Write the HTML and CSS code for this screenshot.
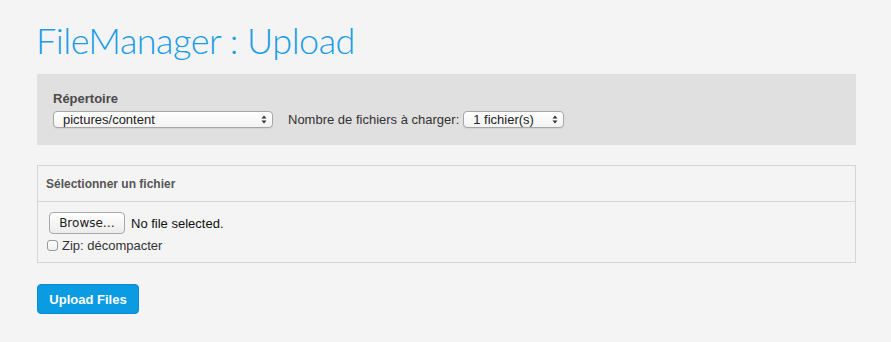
FILE: index.html
```html
<!DOCTYPE html>
<html lang="fr">

<head>
    <meta charset="UTF-8">
    <meta name="viewport" content="width=device-width, initial-scale=1.0">
    <link rel="stylesheet" href="styles.css">
    <title>FileManager : Upload</title>
</head>

<body>
    <div class="page">
        <h1 class="title">FileManager : Upload</h1>

        <div class="options">
            <label class="opt-label" for="dir">Répertoire</label>
            <div class="opt-row">
                <span class="select-wrap dir-select">
                    <select id="dir">
                        <option>pictures/content</option>
                    </select>
                    <svg class="arrows" width="6" height="9" viewBox="0 0 6 9">
                        <path d="M3 0.5 L5.5 3.5 L0.5 3.5 Z M3 8.5 L5.5 5.5 L0.5 5.5 Z" fill="#333"/>
                    </svg>
                </span>
                <span class="count-label">Nombre de fichiers à charger:</span>
                <span class="select-wrap count-select">
                    <select id="count">
                        <option>1 fichier(s)</option>
                        <option>2 fichier(s)</option>
                        <option>3 fichier(s)</option>
                    </select>
                    <svg class="arrows" width="6" height="9" viewBox="0 0 6 9">
                        <path d="M3 0.5 L5.5 3.5 L0.5 3.5 Z M3 8.5 L5.5 5.5 L0.5 5.5 Z" fill="#333"/>
                    </svg>
                </span>
            </div>
        </div>

        <div class="file-box">
            <div class="file-head">Sélectionner un fichier</div>
            <div class="file-body">
                <label class="file-row">
                    <input type="file" class="file-input">
                    <span class="browse">Browse…</span>
                    <span class="file-name">No file selected.</span>
                </label>
                <label class="zip-row">
                    <input type="checkbox" class="zip-check">
                    <span>Zip: décompacter</span>
                </label>
            </div>
        </div>

        <button class="upload-btn">Upload Files</button>
    </div>
</body>

</html>
```

FILE: styles.css
```css
* {
    padding: 0;
    margin: 0;
    box-sizing: border-box;
}

body {
    background-color: #f4f4f4;
    font-family: "Liberation Sans", Arial, sans-serif;
    font-size: 13px;
    color: #222;
}

.page {
    width: 819px;
    margin-left: 37px;
    padding-top: 20px;
}

.title {
    font-family: "Lato", "Liberation Sans", sans-serif;
    font-weight: 300;
    font-size: 36px;
    line-height: 40px;
    letter-spacing: -0.5px;
    margin-left: -1px;
    color: #1a9de6;
    margin-bottom: 14px;
}

.options {
    background-color: #e0e0e0;
    padding: 17px 16px 17px;
}

.opt-label {
    display: block;
    font-weight: bold;
    font-size: 13px;
    line-height: 16px;
    color: #4a4a4a;
    margin-bottom: 4px;
}

.opt-row {
    display: flex;
    align-items: center;
}

.select-wrap {
    position: relative;
    display: inline-block;
}

.select-wrap select {
    appearance: none;
    -webkit-appearance: none;
    display: block;
    width: 100%;
    height: 17px;
    border: 1px solid #a6a6a6;
    border-radius: 4px;
    background: linear-gradient(#ffffff, #f3f3f3);
    font-family: "Liberation Sans", Arial, sans-serif;
    font-size: 13px;
    line-height: 15px;
    color: #222;
    padding: 0 16px 0 9px;
    box-shadow: 0 1px 0 rgba(0, 0, 0, 0.05);
}

.arrows {
    position: absolute;
    right: 6px;
    top: 4px;
    pointer-events: none;
}

.dir-select {
    width: 220px;
}

.count-label {
    margin-left: 15px;
    margin-right: 4px;
    color: #333;
}

.count-select {
    width: 101px;
}

.file-box {
    margin-top: 20px;
    border: 1px solid #d5d5d5;
}

.file-head {
    height: 36px;
    line-height: 36px;
    padding-left: 8px;
    font-weight: bold;
    font-size: 12px;
    color: #555;
    border-bottom: 1px solid #d5d5d5;
}

.file-body {
    padding: 10px 10px 9px 11px;
}

.file-row {
    display: flex;
    align-items: center;
    gap: 6px;
    cursor: pointer;
}

.file-input {
    display: none;
}

.browse {
    display: inline-block;
    width: 76px;
    height: 22px;
    line-height: 20px;
    text-align: center;
    border: 1px solid #a8a8a8;
    border-radius: 4px;
    background: linear-gradient(#ffffff, #ececec);
    font-family: "DejaVu Sans", sans-serif;
    font-size: 12px;
    color: #222;
}

.file-name {
    color: #111;
}

.zip-row {
    display: flex;
    align-items: center;
    gap: 4px;
    margin-top: 4px;
    margin-left: -2px;
    color: #333;
}

.zip-check {
    appearance: none;
    -webkit-appearance: none;
    width: 11px;
    height: 11px;
    border: 1px solid #9a9a9a;
    border-radius: 3px;
    background: linear-gradient(#ffffff, #efefef);
}

.upload-btn {
    display: block;
    margin-top: 21px;
    width: 102px;
    height: 30px;
    border: 1px solid #0a8ad0;
    border-radius: 4px;
    background-color: #0b9be2;
    color: #fff;
    font-family: "Liberation Sans", Arial, sans-serif;
    font-weight: bold;
    font-size: 13px;
}
```
